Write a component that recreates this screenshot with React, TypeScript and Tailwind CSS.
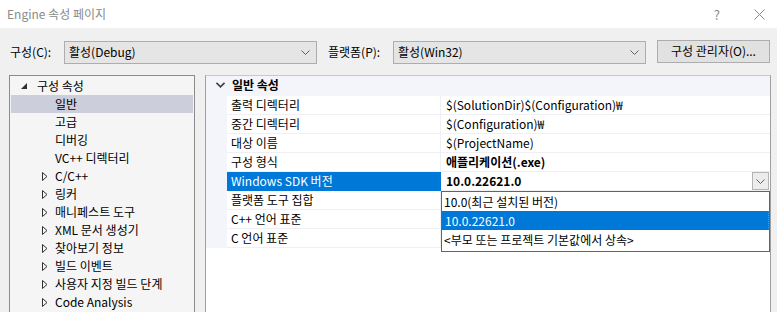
import React from "react";

const FONT = { fontFamily: '"Noto Sans CJK KR", "Noto Sans", sans-serif' };

const tree = [
  { label: "일반", arrow: false, selected: true },
  { label: "고급", arrow: false },
  { label: "디버깅", arrow: false },
  { label: "VC++ 디렉터리", arrow: false },
  { label: "C/C++", arrow: true },
  { label: "링커", arrow: true },
  { label: "매니페스트 도구", arrow: true },
  { label: "XML 문서 생성기", arrow: true },
  { label: "찾아보기 정보", arrow: true },
  { label: "빌드 이벤트", arrow: true },
  { label: "사용자 지정 빌드 단계", arrow: true },
  { label: "Code Analysis", arrow: true },
];

const props = [
  { name: "출력 디렉터리", value: "$(SolutionDir)$(Configuration)₩" },
  { name: "중간 디렉터리", value: "$(Configuration)₩" },
  { name: "대상 이름", value: "$(ProjectName)" },
  { name: "구성 형식", value: "애플리케이션(.exe)", bold: true },
  { name: "Windows SDK 버전", value: "10.0.22621.0", bold: true, active: true },
  { name: "플랫폼 도구 집합", value: "" },
  { name: "C++ 언어 표준", value: "" },
  { name: "C 언어 표준", value: "" },
];

function Chevron({ className = "" }: { className?: string }) {
  return (
    <svg width="9" height="5" viewBox="0 0 9 5" className={className}>
      <path d="M0.5 0.5 L4.5 4.5 L8.5 0.5" fill="none" stroke="#606060" strokeWidth="1" />
    </svg>
  );
}

function Combo({ text, width }: { text: string; width: string }) {
  return (
    <div className={`${width} h-[23px] flex items-center justify-between border border-[#adadad] bg-[#e5e5e5] pl-[4px] pr-[6px]`}>
      <span>{text}</span>
      <Chevron />
    </div>
  );
}

export default function App() {
  return (
    <div className="w-[777px] h-[312px] overflow-hidden bg-[#f0f0f0] text-[12px] leading-none text-black flex flex-col" style={FONT}>
      {/* Title bar */}
      <div className="h-[28px] shrink-0 bg-white flex items-center justify-between pl-[7px] pr-[12px] text-[#8a8a8a]">
        <span>Engine 속성 페이지</span>
        <div className="flex items-center gap-[34px]">
          <span className="text-[13px]">?</span>
          <svg width="11" height="11" viewBox="0 0 11 11">
            <path d="M0.5 0.5 L10.5 10.5 M10.5 0.5 L0.5 10.5" stroke="#8a8a8a" strokeWidth="1" />
          </svg>
        </div>
      </div>

      {/* Toolbar */}
      <div className="h-[47px] shrink-0 flex items-center pl-[10px] pt-[1px]">
        <span className="w-[54px]">구성(C):</span>
        <Combo text="활성(Debug)" width="w-[253px]" />
        <span className="ml-[11px] w-[65px]">플랫폼(P):</span>
        <Combo text="활성(Win32)" width="w-[253px]" />
        <div className="ml-[11px] w-[113px] h-[23px] -mt-[2px] flex items-center justify-center border border-[#adadad] bg-[#e1e1e1]">
          구성 관리자(O)...
        </div>
      </div>

      {/* Panels */}
      <div className="flex pl-[9px] gap-[10px]">
        {/* Tree */}
        <div className="w-[186px] h-[260px] shrink-0 border border-[#8c8c8c] bg-[#f5f5f5] pt-[1px] px-[1px]">
          <div className="h-[18px] flex items-center pl-[10px]">
            <div className="w-[16px]">
              <svg width="6" height="6" viewBox="0 0 6 6">
                <path d="M6 0 L6 6 L0 6 Z" fill="#303030" />
              </svg>
            </div>
            <span>구성 속성</span>
          </div>
          {tree.map((t) => (
            <div key={t.label} className={`h-[18px] flex items-center pl-[31px] ${t.selected ? "bg-[#cccedb]" : ""}`}>
              <div className="w-[13px] flex items-center">
                {t.arrow && (
                  <svg width="6" height="9" viewBox="0 0 6 9">
                    <path d="M0.5 0.5 L5 4.5 L0.5 8.5 Z" fill="none" stroke="#303030" strokeWidth="1" />
                  </svg>
                )}
              </div>
              <span>{t.label}</span>
            </div>
          ))}
        </div>

        {/* Property grid */}
        <div className="relative w-[566px] h-[260px] shrink-0 border border-[#a0a0a0] border-t-[#c8c8c8] bg-white">
          <div className="h-[20px] flex items-center bg-[#f3f5fa] pb-[3px]">
            <div className="w-[26px] flex justify-center pl-[2px]">
              <svg width="9" height="6" viewBox="0 0 9 6">
                <path d="M0.5 0.8 L4.5 4.8 L8.5 0.8" fill="none" stroke="#404040" strokeWidth="1.6" />
              </svg>
            </div>
            <span className="font-bold">일반 속성</span>
          </div>
          {props.map((p) => (
            <div key={p.name} className="h-[19px] flex">
              <div className="w-[21px] bg-[#f3f5fa]" />
              <div
                className={`w-[214px] flex items-center pl-[4px] border-b border-r ${
                  p.active ? "bg-[#0078d7] text-white border-[#0078d7]" : "border-[#eef0f4]"
                }`}
              >
                {p.name}
              </div>
              <div className="flex-1 flex items-center justify-between pl-[5px] pr-[1px] border-b border-[#eef0f4]">
                <span className={p.bold ? "font-bold" : ""}>{p.value}</span>
                {p.active && (
                  <div className="w-[17px] h-[18px] flex items-center justify-center border border-[#b4b4b4] bg-[#ececec]">
                    <Chevron />
                  </div>
                )}
              </div>
            </div>
          ))}

          {/* Dropdown list */}
          <div className="absolute left-[235px] top-[115px] w-[329px] h-[61px] border border-[#646464] bg-white flex flex-col">
            <div className="h-[19px] flex items-center pl-[2px]">10.0(최근 설치된 버전)</div>
            <div className="h-[19px] flex items-center pl-[2px] bg-[#0078d7] text-white border border-dotted border-[#d08020] border-l-[#0078d7] border-t-[#0078d7] border-b-[#0078d7]">
              10.0.22621.0
            </div>
            <div className="h-[19px] flex items-center pl-[2px]">&lt;부모 또는 프로젝트 기본값에서 상속&gt;</div>
          </div>
        </div>
      </div>
    </div>
  );
}
